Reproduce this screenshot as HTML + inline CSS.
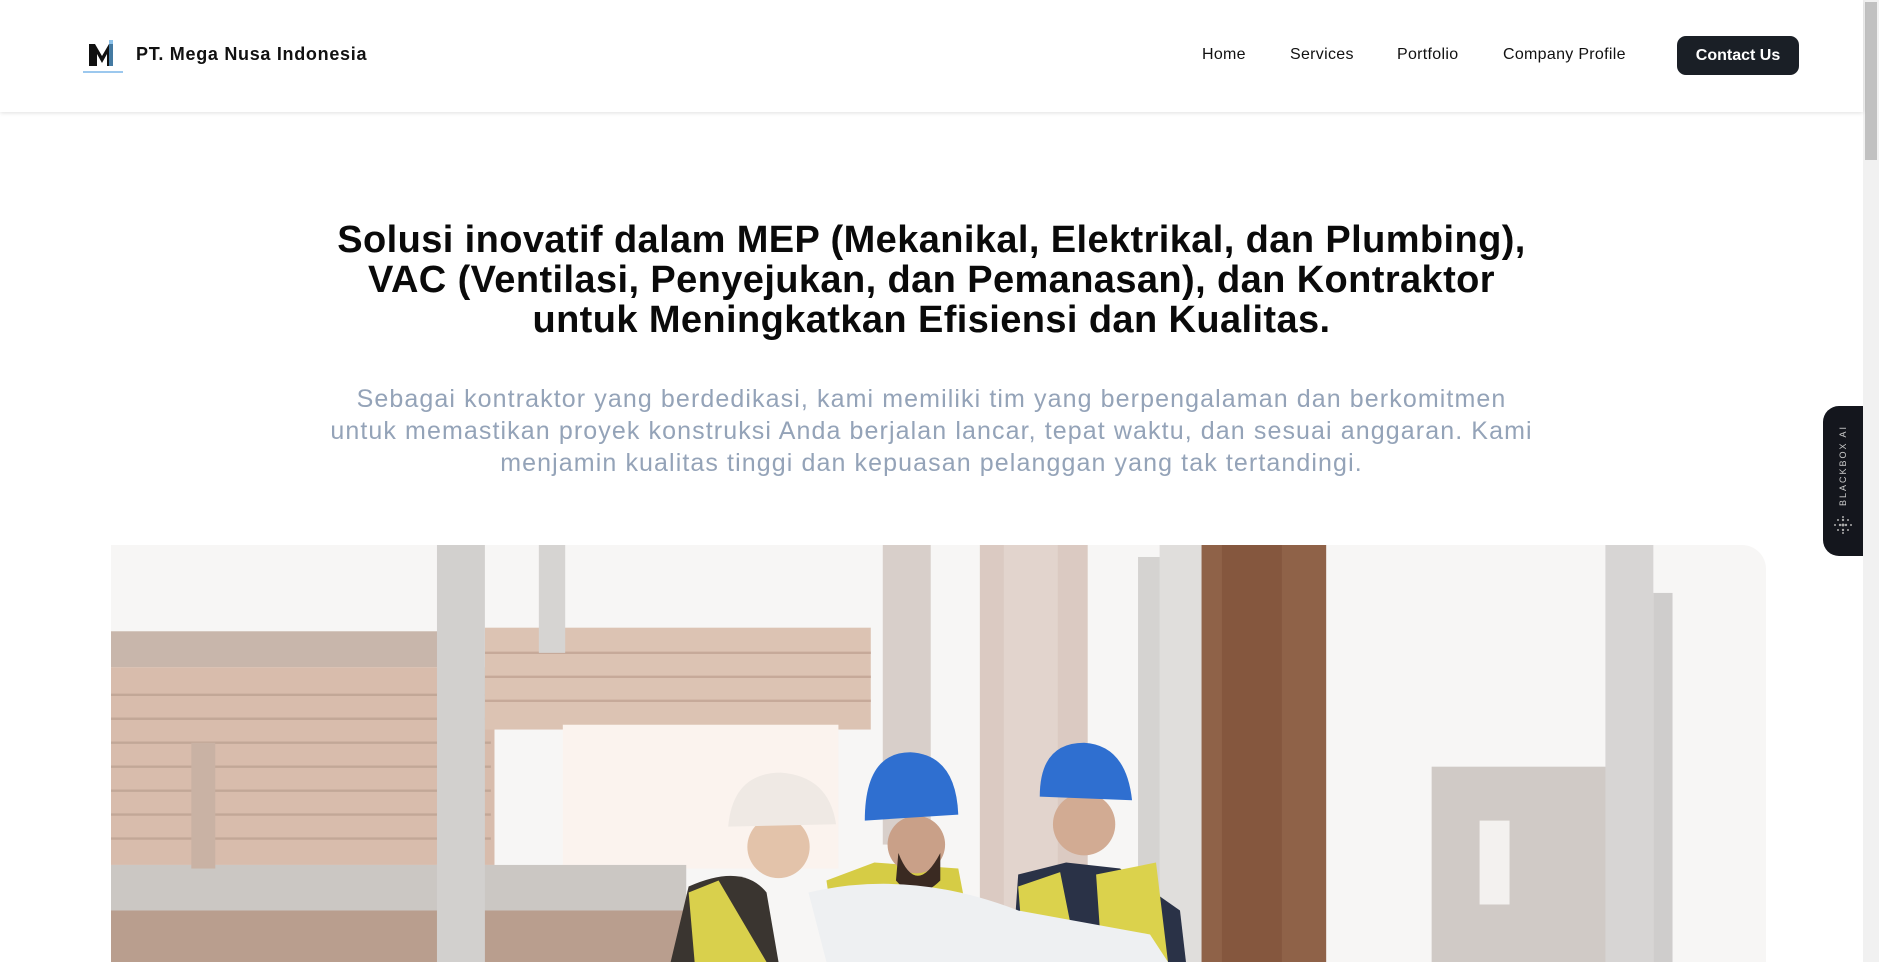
<!DOCTYPE html>
<html><head><meta charset="utf-8"><style>
*{margin:0;padding:0;box-sizing:border-box}
html,body{width:1879px;height:962px;overflow:hidden;background:#fff;font-family:"Liberation Sans",sans-serif}
.nav{position:absolute;left:0;top:0;width:1863px;height:112px;background:#fff;box-shadow:0 1px 4px rgba(0,0,0,.12);z-index:2}
.logo{position:absolute;left:83px;top:36px;width:44px;height:40px}
.brand{position:absolute;left:136px;top:44px;font-size:18px;font-weight:bold;color:#111;letter-spacing:.7px}
.nl{position:absolute;top:46px;font-size:16px;color:#111;letter-spacing:.3px}
.btn{position:absolute;left:1677px;top:36px;width:122px;height:39px;border-radius:9px;background:#1a1f26;color:#fff;font-weight:bold;font-size:16px;text-align:center;line-height:39px}
.sb{position:absolute;left:1863px;top:0;width:16px;height:962px;background:#f1f1f1}
.sb div{position:absolute;left:2px;top:2px;width:12px;height:158px;background:#c1c1c1}
h1{position:absolute;left:0;width:1863px;top:220px;text-align:center;font-size:38px;line-height:40px;font-weight:bold;color:#0a0a0a;letter-spacing:.4px}
p.s{position:absolute;left:0;width:1863px;top:383px;text-align:center;font-size:25px;line-height:32px;color:#94a3b8;letter-spacing:1.1px;white-space:nowrap}
.img{position:absolute;left:111px;top:545px;width:1655px;height:417px;border-top-right-radius:24px;overflow:hidden}
.bb{position:absolute;left:1823px;top:406px;width:40px;height:150px;background:#14161d;border-radius:16px 0 0 16px}
.bb span{position:absolute;left:5px;top:100px;transform:rotate(-90deg);transform-origin:0 0;color:#ccc;font-size:9px;letter-spacing:2px;white-space:nowrap;margin-left:10px}
</style></head><body>
<div class="nav">
<svg class="logo" viewBox="0 0 44 40"><path d="M6 30V8h6l7 12 7-12h4v22h-6V18l-5 9-5-9v12z" fill="#111"/><rect x="26" y="4" width="4" height="26" fill="#5aa7e0" opacity=".7"/><rect x="0" y="35" width="40" height="2" fill="#9cc8ee"/></svg>
<div class="brand">PT. Mega Nusa Indonesia</div>
<div class="nl" style="left:1202px">Home</div>
<div class="nl" style="left:1290px">Services</div>
<div class="nl" style="left:1397px">Portfolio</div>
<div class="nl" style="left:1503px">Company Profile</div>
<div class="btn">Contact Us</div>
</div>
<div class="sb"><div></div></div>
<h1>Solusi inovatif dalam MEP (Mekanikal, Elektrikal, dan Plumbing),<br>VAC (Ventilasi, Penyejukan, dan Pemanasan), dan Kontraktor<br>untuk Meningkatkan Efisiensi dan Kualitas.</h1>
<p class="s">Sebagai kontraktor yang berdedikasi, kami memiliki tim yang berpengalaman dan berkomitmen<br>untuk memastikan proyek konstruksi Anda berjalan lancar, tepat waktu, dan sesuai anggaran. Kami<br>menjamin kualitas tinggi dan kepuasan pelanggan yang tak tertandingi.</p>
<div class="img"><svg width="1655" height="417" viewBox="93 455 1381 348" preserveAspectRatio="none">
<rect x="93" y="455" width="1381" height="348" fill="#f7f6f5"/>
<rect x="93" y="527" width="280" height="30" fill="#c8b6ab"/>
<rect x="93" y="557" width="320" height="165" fill="#d8bcac"/>
<g stroke="#c2a797" stroke-width="2"><line x1="93" y1="580" x2="410" y2="580"/><line x1="93" y1="600" x2="410" y2="600"/><line x1="93" y1="620" x2="410" y2="620"/><line x1="93" y1="640" x2="410" y2="640"/><line x1="93" y1="660" x2="410" y2="660"/><line x1="93" y1="680" x2="410" y2="680"/><line x1="93" y1="700" x2="410" y2="700"/></g>
<rect x="405" y="524" width="322" height="85" fill="#dcc3b3"/>
<g stroke="#c6a999" stroke-width="2"><line x1="405" y1="545" x2="727" y2="545"/><line x1="405" y1="565" x2="727" y2="565"/><line x1="405" y1="585" x2="727" y2="585"/></g>
<rect x="470" y="605" width="230" height="120" fill="#fbf3ee"/>
<rect x="93" y="722" width="480" height="38" fill="#cbc7c3"/>
<rect x="93" y="760" width="480" height="43" fill="#b99e8e"/>
<rect x="365" y="455" width="40" height="348" fill="#d2d0ce"/>
<rect x="450" y="455" width="22" height="90" fill="#d6d4d2"/>
<rect x="160" y="620" width="20" height="105" fill="#c9b2a4"/>
<rect x="737" y="455" width="40" height="250" fill="#d8cfca"/>
<rect x="818" y="455" width="90" height="350" fill="#dbcac2"/>
<rect x="838" y="455" width="45" height="350" fill="#e2d4cd"/>
<rect x="950" y="465" width="22" height="338" fill="#d5d3d1"/>
<rect x="968" y="455" width="38" height="348" fill="#e0dedc"/>
<rect x="1003" y="455" width="104" height="348" fill="#8f6248"/>
<rect x="1020" y="455" width="50" height="348" fill="#7e5038" opacity=".6"/>
<rect x="1195" y="640" width="175" height="163" fill="#d0cac6"/>
<rect x="1235" y="685" width="25" height="70" fill="#f3f1ef"/>
<rect x="1340" y="455" width="40" height="348" fill="#d7d5d4"/>
<rect x="1380" y="495" width="16" height="308" fill="#cfcdcc"/>
<path d="M560 803 L575 740 Q620 720 640 745 L650 803Z" fill="#3a3530"/>
<path d="M575 745 L600 735 L640 803 L580 803Z" fill="#d9d04c"/>
<circle cx="650" cy="707" r="26" fill="#e3c3aa"/>
<path d="M608 690 Q612 645 652 645 Q692 648 698 688Z" fill="#efe9e4"/>
<path d="M690 735 L730 720 L800 725 L815 803 L700 803Z" fill="#d6cc45"/>
<circle cx="765" cy="705" r="24" fill="#c9a088"/>
<path d="M750 712 Q765 750 785 712 L785 735 Q765 755 748 735Z" fill="#3a2a22"/>
<path d="M722 685 Q722 628 760 628 Q798 630 800 680Z" fill="#2f6fd0"/>
<path d="M845 803 L850 730 L890 720 L935 725 L985 760 L990 803Z" fill="#2a3247"/>
<path d="M850 740 L885 728 L900 803 L855 803Z M915 730 L965 720 L975 803 L920 803Z" fill="#dbd24c"/>
<circle cx="905" cy="688" r="26" fill="#d2ab93"/>
<path d="M868 665 Q868 620 905 620 Q940 622 945 668Z" fill="#2f6fd0"/>
<path d="M675 745 Q760 725 850 760 L960 780 L975 803 L690 803Z" fill="#eef0f2"/>
</svg></div>
<div class="bb"><span>BLACKBOX AI</span>
<svg style="position:absolute;left:9px;top:108px" width="22" height="22"><g fill="#aaa"><circle cx="11" cy="3" r="1"/><circle cx="6" cy="6" r="1"/><circle cx="11" cy="6" r="1.2"/><circle cx="16" cy="6" r="1"/><circle cx="3" cy="11" r="1"/><circle cx="8" cy="11" r="1.2"/><circle cx="11" cy="11" r="1.5"/><circle cx="14" cy="11" r="1.2"/><circle cx="19" cy="11" r="1"/><circle cx="6" cy="16" r="1"/><circle cx="11" cy="16" r="1.2"/><circle cx="16" cy="16" r="1"/><circle cx="11" cy="19" r="1"/></g></svg></div>
</body></html>
